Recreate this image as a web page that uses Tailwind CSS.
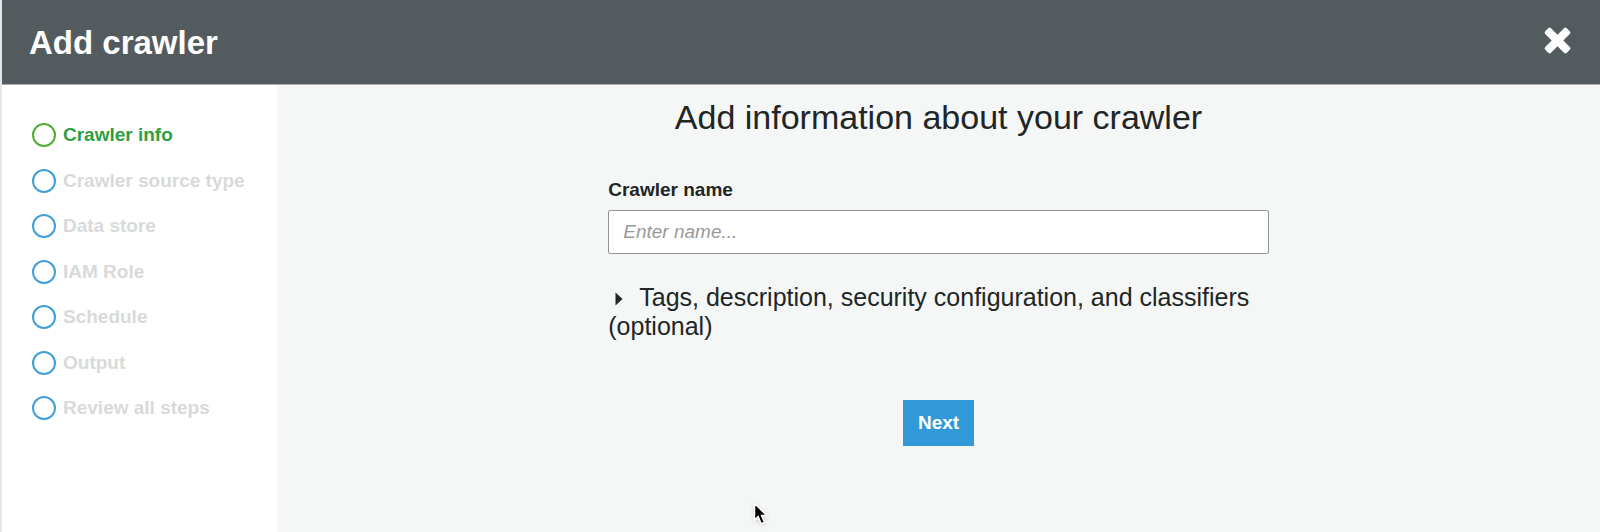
<!DOCTYPE html>
<html lang="en">
<head>
  <meta charset="UTF-8" />
  <meta name="viewport" content="width=device-width, initial-scale=1.0" />
  <title>Add crawler</title>
  <script src="https://cdn.jsdelivr.net/npm/@tailwindcss/browser@4"></script>
</head>
<body class="min-h-screen flex flex-col bg-[#f4f7f6] border-l-2 border-[#e3e7e8] font-['Liberation_Sans',Arial,sans-serif] text-[#212526]">
  <!-- Title bar -->
  <header class="flex items-center justify-between h-[85px] pb-1 pl-[27px] pr-[29px] bg-[#545b5e] border-t border-t-[#545b68] border-b border-b-[#a9adae] text-white">
    <h1 class="text-[33px] leading-10 font-bold pt-1">Add crawler</h1>
    <button type="button" aria-label="Close">
      <svg class="w-[27px] h-[27px]" viewBox="0 0 27 27" fill="currentColor">
        <path d="M4.2 1.2 Q5.6 0 7 1.2 L13.5 7.7 L20 1.2 Q21.4 0 22.8 1.2 L25.8 4.2 Q27 5.6 25.8 7 L19.3 13.5 L25.8 20 Q27 21.4 25.8 22.8 L22.8 25.8 Q21.4 27 20 25.8 L13.5 19.3 L7 25.8 Q5.6 27 4.2 25.8 L1.2 22.8 Q0 21.4 1.2 20 L7.7 13.5 L1.2 7 Q0 5.6 1.2 4.2 Z" />
      </svg>
    </button>
  </header>

  <div class="flex flex-1">
    <!-- Wizard steps -->
    <nav class="w-[275px] shrink-0 bg-white pt-[38px] pl-[30px]">
      <ol class="flex flex-col justify-between h-[297px] text-[19px] leading-6 font-bold text-[#d8dada]">
        <li class="flex gap-[7px] text-[#2ea043]"><span class="size-6 rounded-full border-2 border-[#4fae33]"></span>Crawler info</li>
        <li class="flex gap-[7px]"><span class="size-6 rounded-full border-2 border-[#419fd9]"></span>Crawler source type</li>
        <li class="flex gap-[7px]"><span class="size-6 rounded-full border-2 border-[#419fd9]"></span>Data store</li>
        <li class="flex gap-[7px]"><span class="size-6 rounded-full border-2 border-[#419fd9]"></span>IAM Role</li>
        <li class="flex gap-[7px]"><span class="size-6 rounded-full border-2 border-[#419fd9]"></span>Schedule</li>
        <li class="flex gap-[7px]"><span class="size-6 rounded-full border-2 border-[#419fd9]"></span>Output</li>
        <li class="flex gap-[7px]"><span class="size-6 rounded-full border-2 border-[#419fd9]"></span>Review all steps</li>
      </ol>
    </nav>

    <main class="flex-1 px-px">
      <form class="w-1/2 mx-auto flex flex-col">
        <h2 class="mt-3 text-center text-[34px] leading-10 whitespace-nowrap">Add information about your crawler</h2>
        <label for="crawler-name" class="mt-[41px] text-[19px] leading-6 font-bold">Crawler name</label>
        <input id="crawler-name" type="text" placeholder="Enter name..." class="mt-2 h-11 px-3.5 bg-white border border-[#8f9494] rounded-xs text-[19px] placeholder:italic placeholder:text-[#999999]" />
        <button type="button" aria-expanded="false" class="mt-[29px] text-left text-[25px] leading-[29px]">
          <svg class="inline-block w-2 h-3.5 ml-[7px] mr-4 align-baseline" viewBox="0 0 8 14" fill="currentColor"><path d="M0.5 0.5 L7.5 7 L0.5 13.5 Z" /></svg>Tags, description, security configuration, and classifiers (optional)
        </button>
        <button type="button" class="mt-[59px] mx-auto h-[46px] px-[15px] bg-[#3299d9] text-white text-[19px] font-bold">Next</button>
      </form>
    </main>
  </div>

  <!-- Mouse pointer -->
  <svg class="absolute left-[753px] top-[502px] w-4 h-6 drop-shadow-sm pointer-events-none" viewBox="0 0 16 24">
    <path d="M1.5 1.5 L1.5 18 L5.2 14.6 L8.1 21.8 L11.5 20.4 L8.6 13.5 L13.8 13.5 Z" fill="#000" stroke="#fff" stroke-width="1.5" />
  </svg>
</body>
</html>
